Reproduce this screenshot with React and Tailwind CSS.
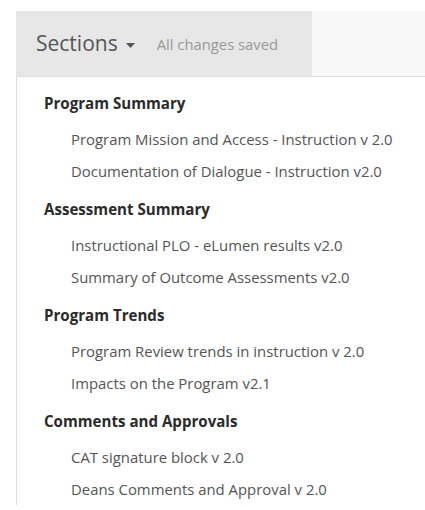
const sections = [
  {
    title: 'Program Summary',
    items: ['Program Mission and Access - Instruction v 2.0', 'Documentation of Dialogue - Instruction v2.0'],
  },
  {
    title: 'Assessment Summary',
    items: ['Instructional PLO - eLumen results v2.0', 'Summary of Outcome Assessments v2.0'],
  },
  {
    title: 'Program Trends',
    items: ['Program Review trends in instruction v 2.0', 'Impacts on the Program v2.1'],
  },
  {
    title: 'Comments and Approvals',
    items: ['CAT signature block v 2.0', 'Deans Comments and Approval v 2.0'],
  },
];

export default function App() {
  return (
    <div className="h-[510px] w-[425px] overflow-hidden bg-white pt-[11px] pl-4" style={{ fontFamily: '"Open Sans", "Noto Sans", sans-serif' }}>
      {/* Top bar */}
      <div className="flex h-[66px] border-b border-[#dcdcdc]">
        <div className="flex w-[296px] items-center bg-[#e7e7e7] pl-5">
          <span className="text-[21px] text-[#555]">Sections</span>
          <svg width="9" height="5" viewBox="0 0 9 5" className="ml-[8px] mt-[4px]">
            <path d="M0 0h9L4.5 5z" fill="#555" />
          </svg>
          <span className="ml-[22px] mt-[1px] text-[14.8px] text-[#999]">All changes saved</span>
        </div>
        <div className="flex-1 bg-[#f8f8f8]" />
      </div>

      {/* Section list */}
      <div className="border-l border-[#dcdcdc] pl-[27px] pt-[16px]">
        {sections.map((section) => (
          <section key={section.title} className="mb-[12px]">
            <h2 className="text-[15.1px] font-bold leading-[20px] text-[#2b2b2b]">{section.title}</h2>
            <ul className="mt-[10px]">
              {section.items.map((item) => (
                <li key={item} className="pl-[27px] text-[14.9px] leading-[32px] text-[#555]">
                  {item}
                </li>
              ))}
            </ul>
          </section>
        ))}
      </div>
    </div>
  );
}
